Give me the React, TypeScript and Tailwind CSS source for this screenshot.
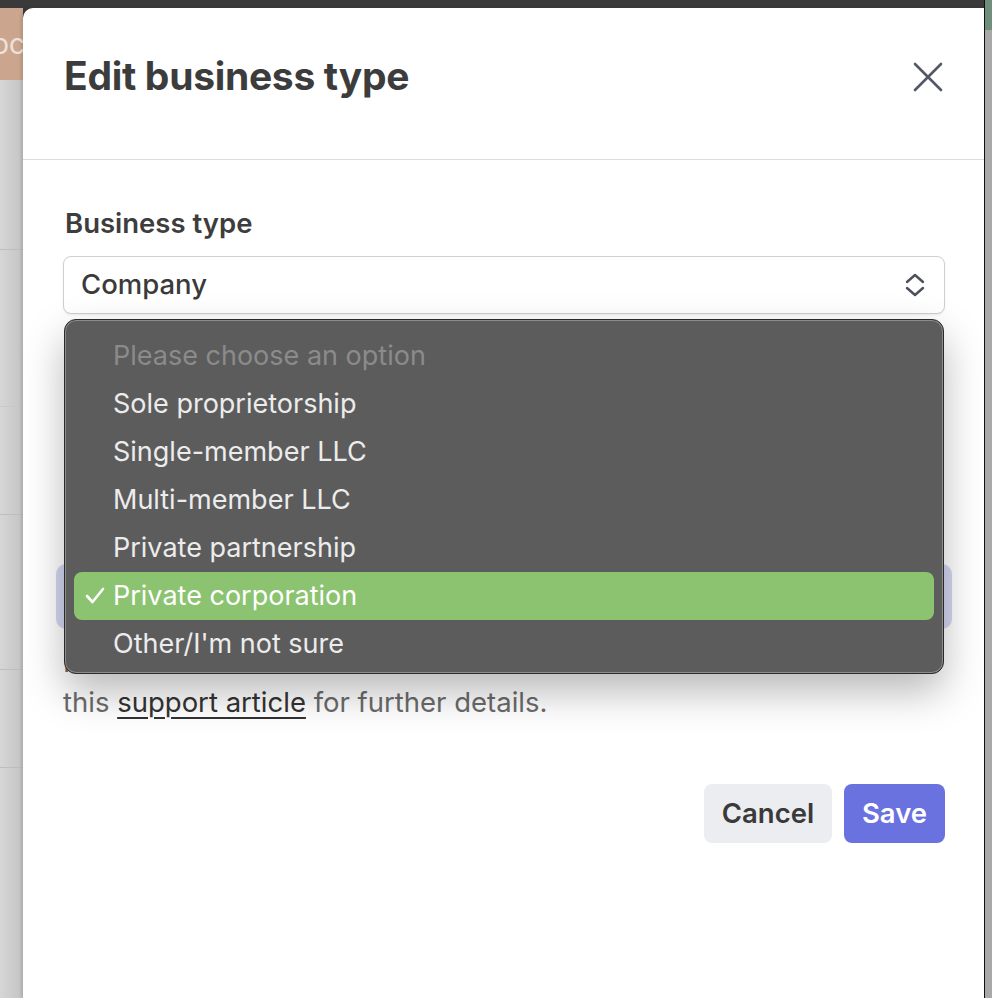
const OPTIONS = [
  'Sole proprietorship',
  'Single-member LLC',
  'Multi-member LLC',
  'Private partnership',
  'Private corporation',
  "Other/I'm not sure",
];

const SELECTED = 'Private corporation';

function SelectMenu() {
  return (
    <div className="absolute left-[41px] top-[159px] h-[355px] w-[880px] rounded-[12px] border border-[#2b2b2b] bg-[#5c5c5d] pt-[12px] shadow-[inset_0_0_0_1px_#8c8c8c,0_18px_40px_rgba(0,0,0,0.28)]">
      <div className="flex h-[48px] items-center pl-[48px] text-[27px] text-[#8b8b8b]">
        Please choose an option
      </div>
      {OPTIONS.map((opt) => {
        const active = opt === SELECTED;
        return (
          <div
            key={opt}
            className={
              active
                ? 'relative mx-[9px] flex h-[48px] items-center rounded-[8px] bg-[#8bc370] pl-[39px] text-[27px] text-white'
                : 'flex h-[48px] items-center pl-[48px] text-[27px] text-[#ececec]'
            }
          >
            {active && (
              <svg
                className="absolute left-[11px] top-[15px]"
                width="20"
                height="18"
                viewBox="0 0 20 18"
                fill="none"
                stroke="white"
                strokeWidth="2.6"
                strokeLinecap="round"
                strokeLinejoin="round"
              >
                <polyline points="2,9 7.5,15 18,2" />
              </svg>
            )}
            {opt}
          </div>
        );
      })}
    </div>
  );
}

export default function App() {
  return (
    <div className="flex h-[998px] w-[992px] overflow-hidden bg-[#d3d3d3] font-['Inter','Noto_Sans',sans-serif]">
      {/* page behind the modal, left edge */}
      <div className="flex w-[23px] flex-col">
        <div className="h-[8px] bg-[#3a3a3a]" />
        <div className="flex h-[72px] items-center justify-end overflow-hidden bg-[#cba58e] text-[28px] text-[#ece2da]">
          <span className="-mr-[2px]">oc</span>
        </div>
        <div className="flex-1 bg-gradient-to-r from-[#d6d6d6] to-[#c4c4c4]">
          <div className="h-[170px] border-b border-[#bdbdbd]" />
          <div className="h-[157px] border-b border-[#c9c9c9]" />
          <div className="h-[108px] border-b border-[#bdbdbd]" />
          <div className="h-[155px] border-b border-[#bdbdbd]" />
          <div className="h-[98px] border-b border-[#bdbdbd]" />
        </div>
      </div>

      <div className="flex w-[961px] flex-col bg-[#3a3a3a]">
        <div className="h-[8px]" />
        <div className="flex flex-1 flex-col rounded-tl-[10px] bg-white shadow-[-2px_0_3px_rgba(0,0,0,0.12)]">
          <div className="flex h-[152px] items-center justify-between border-b border-[#dcdcdc] pb-[14px] pl-[41px] pr-[41px]">
            <h1 className="text-[39px] font-bold tracking-[-0.3px] text-[#3c3c3c]">Edit business type</h1>
            <svg width="30" height="30" viewBox="0 0 30 30" fill="none" stroke="#535866" strokeWidth="2.6" strokeLinecap="round">
              <line x1="2" y1="2" x2="28" y2="28" />
              <line x1="28" y1="2" x2="2" y2="28" />
            </svg>
          </div>

          <div className="relative flex flex-col pl-[40px] pr-[39px]">
            <label className="mt-[46px] pl-[2px] text-[27.5px] leading-[34px] font-semibold text-[#3d3d3d]">
              Business type
            </label>
            <div className="mt-[16px] flex h-[58px] items-center justify-between rounded-[8px] border border-[#d0d0d0] bg-white pl-[17px] pr-[18px] shadow-[0_1px_2px_rgba(0,0,0,0.08)]">
              <span className="text-[27.5px] font-medium text-[#3a3a3a]">Company</span>
              <svg width="22" height="24" viewBox="0 0 22 24" fill="none" stroke="#4b505b" strokeWidth="2.4" strokeLinecap="round" strokeLinejoin="round">
                <polyline points="3,9 11,2 19,9" />
                <polyline points="3,15 11,22 19,15" />
              </svg>
            </div>

            {/* content covered by the open menu */}
            <div className="mt-[20px] h-[230px] overflow-hidden">
              <p className="text-[27px] leading-[40px] text-[#6b6b6b]">
                Select the legal structure that best describes how your business is registered with
                the relevant authorities in your country.
              </p>
            </div>
            <div className="-mx-[7px] h-[65px] rounded-[10px] bg-[#d5d7f2]" />
            <p className="mt-[13px] text-[27.5px] leading-[40px] text-[#6b6b6b]">
              Not sure which one to choose? Read
              <br />
              this{' '}
              <span className="text-[#333333] underline decoration-[1.5px] underline-offset-[5px]">support article</span>{' '}
              for further details.
            </p>

            <div className="mt-[62px] flex justify-end gap-[12px]">
              <button className="h-[59px] w-[128px] rounded-[8px] bg-[#ecedf1] text-[27.5px] font-semibold text-[#3a3a3a]">
                Cancel
              </button>
              <button className="h-[59px] w-[101px] rounded-[8px] bg-[#6a72df] text-[27.5px] font-semibold text-white">
                Save
              </button>
            </div>

            <SelectMenu />
          </div>
        </div>
      </div>

      {/* page behind, right edge */}
      <div className="flex w-[8px] flex-col border-l border-[#111111]">
        <div className="h-[30px] bg-[#6f8e7b]" />
        <div className="flex-1 bg-[#a9a9a9]" />
      </div>
    </div>
  );
}
